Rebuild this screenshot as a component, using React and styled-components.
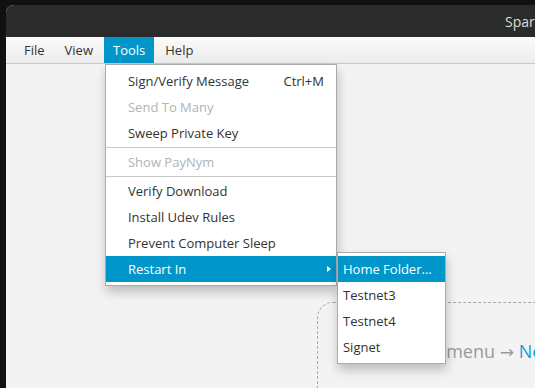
import React from "react";
import styled, { createGlobalStyle } from "styled-components";

const Global = createGlobalStyle`
  html, body { margin: 0; padding: 0; background: #111111; overflow: hidden; }
  #root { width: 535px; height: 388px; }
  * { box-sizing: border-box; }
`;

const Screen = styled.div`
  width: 535px;
  height: 388px;
  padding: 5px 0 0 6px;
  background: #111111;
  overflow: hidden;
  font-family: "Open Sans", "Noto Sans", sans-serif;
`;

const Window = styled.div`
  width: 1100px;
  height: 100%;
  display: flex;
  flex-direction: column;
  background: #f3f3f3;
  border-top-left-radius: 8px;
  overflow: hidden;
`;

const TitleBar = styled.div`
  height: 32px;
  flex: none;
  display: flex;
  align-items: center;
  padding-left: 499px;
  background: #2b2b2b;
  color: #dedede;
  font-size: 14px;
`;

const MenuBar = styled.div`
  height: 27px;
  flex: none;
  display: flex;
  gap: 2px;
  padding-left: 9px;
  background: linear-gradient(#fbfbfb, #ececec);
  border-bottom: 1px solid #c9c9c9;
  position: relative;
  z-index: 2;
`;

const MenuTitle = styled.div`
  position: relative;
  height: 26px;
  padding: 0 9px;
  display: flex;
  align-items: center;
  font-size: 13px;
  color: ${(p) => (p.$active ? "#ffffff" : "#333333")};
  background: ${(p) => (p.$active ? "#0096c9" : "transparent")};
`;

const Popup = styled.div`
  position: absolute;
  top: ${(p) => p.$top};
  left: ${(p) => p.$left};
  width: ${(p) => p.$width};
  padding: 3px 0;
  background: #ffffff;
  border: 1px solid #ababab;
  box-shadow: 1px 6px 10px rgba(0, 0, 0, 0.22);
  display: flex;
  flex-direction: column;
  z-index: 5;
`;

const Item = styled.div`
  position: relative;
  height: 26px;
  display: flex;
  align-items: center;
  justify-content: space-between;
  padding: 0 12px 0 ${(p) => p.$indent};
  font-size: 13px;
  white-space: nowrap;
  color: ${(p) => (p.$active ? "#ffffff" : p.$disabled ? "#b3b3b3" : "#333333")};
  background: ${(p) => (p.$active ? "#0096c9" : "transparent")};
`;

const Separator = styled.div`
  height: 1px;
  margin: 1px 0;
  background: #c8c8c8;
  flex: none;
`;

const Arrow = styled.span`
  width: 0;
  height: 0;
  margin-right: -7px;
  border-left: 4px solid #ffffff;
  border-top: 3.5px solid transparent;
  border-bottom: 3.5px solid transparent;
`;

const Content = styled.div`
  flex: 1;
  padding: 238px 0 0 311px;
`;

const DropZone = styled.div`
  width: 600px;
  height: 200px;
  border: 1px dashed #a9a9a9;
  border-top-left-radius: 16px;
  padding: 36px 0 0 95px;
  font-size: 18px;
  color: #9a9a9a;
  white-space: nowrap;
`;

const ArrowGlyph = styled.span`
  font-family: "DejaVu Sans", sans-serif;
  font-size: 17px;
`;

const Link = styled.span`
  color: #0fa0db;
`;

const mainItems = [
  { label: "Sign/Verify Message", shortcut: "Ctrl+M" },
  { label: "Send To Many", disabled: true },
  { label: "Sweep Private Key" },
  { sep: true },
  { label: "Show PayNym", disabled: true },
  { sep: true },
  { label: "Verify Download" },
  { label: "Install Udev Rules" },
  { label: "Prevent Computer Sleep" },
];

const subItems = ["Home Folder...", "Testnet3", "Testnet4", "Signet"];

export default function App() {
  return (
    <>
      <Global />
      <Screen>
        <Window>
          <TitleBar>Sparrow</TitleBar>
          <MenuBar>
            <MenuTitle>File</MenuTitle>
            <MenuTitle>View</MenuTitle>
            <MenuTitle $active>
              Tools
              <Popup $top="27px" $left="1px" $width="232px">
                {mainItems.map((it, i) =>
                  it.sep ? (
                    <Separator key={i} />
                  ) : (
                    <Item key={i} $indent="22px" $disabled={it.disabled}>
                      <span>{it.label}</span>
                      {it.shortcut && <span>{it.shortcut}</span>}
                    </Item>
                  )
                )}
                <Item $indent="22px" $active>
                  <span>Restart In</span>
                  <Arrow />
                  <Popup $top="-4px" $left="calc(100% + 1px)" $width="109px">
                    {subItems.map((s, i) => (
                      <Item key={s} $indent="5px" $active={i === 0}>
                        <span>{s}</span>
                      </Item>
                    ))}
                  </Popup>
                </Item>
              </Popup>
            </MenuTitle>
            <MenuTitle>Help</MenuTitle>
          </MenuBar>
          <Content>
            <DropZone>
              File menu <ArrowGlyph>→</ArrowGlyph> <Link>New Wallet</Link>
            </DropZone>
          </Content>
        </Window>
      </Screen>
    </>
  );
}
